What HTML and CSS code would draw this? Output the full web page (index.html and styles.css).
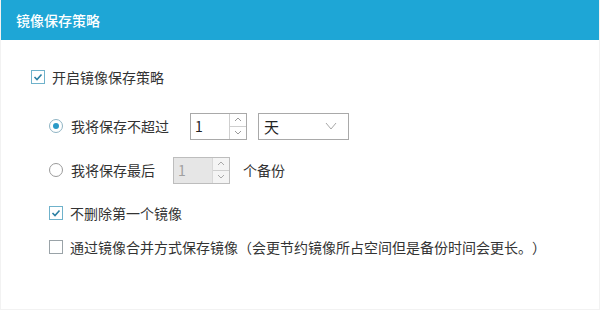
FILE: index.html
```html
<!DOCTYPE html>
<html lang="zh">
<head>
<meta charset="utf-8">
<link rel="stylesheet" href="styles.css">
</head>
<body>
<div class="window">
  <div class="header">镜像保存策略</div>
  <div class="content">
    <div class="row row-main">
      <span class="check checked"><svg viewBox="0 0 14 14" width="14" height="14"><path d="M3.5 7 L6 9.5 L10.5 4.5" fill="none" stroke="#2b7fa3" stroke-width="1.6"/></svg></span>
      <span class="label">开启镜像保存策略</span>
    </div>
    <div class="row row-r1">
      <span class="radio on"><span class="dot"></span></span>
      <span class="label">我将保存不超过</span>
      <div class="spin">
        <span class="val">1</span>
        <span class="arrows">
          <span class="arr"><svg viewBox="0 0 8 5" width="8" height="5"><path d="M1 4 L4 1 L7 4" fill="none" stroke="#9a9a9a" stroke-width="1"/></svg></span>
          <span class="arr"><svg viewBox="0 0 8 5" width="8" height="5"><path d="M1 1 L4 4 L7 1" fill="none" stroke="#9a9a9a" stroke-width="1"/></svg></span>
        </span>
      </div>
      <div class="select">
        <span class="val">天</span>
        <svg viewBox="0 0 12 8" width="12" height="8"><path d="M1 1 L6 7 L11 1" fill="none" stroke="#a8a8a8" stroke-width="1"/></svg>
      </div>
    </div>
    <div class="row row-r2">
      <span class="radio"></span>
      <span class="label">我将保存最后</span>
      <div class="spin disabled">
        <span class="val">1</span>
        <span class="arrows">
          <span class="arr"><svg viewBox="0 0 8 5" width="8" height="5"><path d="M1 4 L4 1 L7 4" fill="none" stroke="#a9a9a9" stroke-width="1"/></svg></span>
          <span class="arr"><svg viewBox="0 0 8 5" width="8" height="5"><path d="M1 1 L4 4 L7 1" fill="none" stroke="#a9a9a9" stroke-width="1"/></svg></span>
        </span>
      </div>
      <span class="label unit">个备份</span>
    </div>
    <div class="row row-c1">
      <span class="check checked"><svg viewBox="0 0 14 14" width="14" height="14"><path d="M3.5 7 L6 9.5 L10.5 4.5" fill="none" stroke="#2b7fa3" stroke-width="1.6"/></svg></span>
      <span class="label">不删除第一个镜像</span>
    </div>
    <div class="row row-c2">
      <span class="check"></span>
      <span class="label">通过镜像合并方式保存镜像（会更节约镜像所占空间但是备份时间会更长。）</span>
    </div>
  </div>
</div>
</body>
</html>
```

FILE: styles.css
```css
html, body {
  margin: 0;
  padding: 0;
  background: #ffffff;
}
body {
  font-family: "Noto Sans CJK SC", "Microsoft YaHei", sans-serif;
  font-size: 14px;
  color: #333333;
  text-spacing-trim: space-all;
}
.window {
  width: 600px;
  height: 310px;
  box-sizing: border-box;
  border-left: 1px solid #f2f2f2;
  border-right: 1px solid #f2f2f2;
  border-bottom: 1px solid #f2f2f2;
  background: #fff;
}
.header {
  height: 40px;
  background: #1ea6d6;
  color: #ffffff;
  font-size: 14px;
  font-weight: 500;
  line-height: 40px;
  padding-left: 15px;
}
.content {
  display: flex;
  flex-direction: column;
}
.row {
  display: flex;
  align-items: center;
  height: 26px;
}
.row-main { margin-top: 24px; padding-left: 30px; }
.row-r1 { margin-top: 23px; padding-left: 48px; }
.row-r2 { margin-top: 18px; padding-left: 48px; }
.row-c1 { margin-top: 17px; padding-left: 48px; }
.row-c2 { margin-top: 8px; padding-left: 48px; }

.check {
  width: 14px;
  height: 14px;
  box-sizing: border-box;
  border: 1px solid #9aa3a8;
  background: #fff;
  margin-right: 7px;
  display: inline-flex;
  position: relative;
}
.check.checked {
  border-color: #6fb2cb;
}
.check svg {
  position: absolute;
  left: -1px;
  top: -1px;
}
.radio {
  width: 14px;
  height: 14px;
  box-sizing: border-box;
  border: 1px solid #9a9a9a;
  border-radius: 50%;
  margin-right: 8px;
  display: inline-flex;
  align-items: center;
  justify-content: center;
}
.radio.on { border-color: #8fb4c4; }
.radio .dot {
  width: 6px;
  height: 6px;
  border-radius: 50%;
  background: #2b9ac7;
}
.label {
  white-space: nowrap;
  line-height: 20px;
}
.row-r1 .label { margin-right: 21px; }
.row-r2 .label { margin-right: 18px; }
.label.unit { margin-left: 13px; margin-right: 0; }

.spin {
  width: 57px;
  height: 27px;
  box-sizing: border-box;
  border: 1px solid #a9a9a9;
  display: flex;
  background: #fff;
}
.spin .val {
  flex: 1;
  padding-left: 4px;
  line-height: 25px;
  font-size: 14px;
  color: #222;
}
.spin .arrows {
  width: 16px;
  border-left: 1px solid #cfcfcf;
  display: flex;
  flex-direction: column;
}
.spin .arr {
  flex: 1;
  display: flex;
  align-items: center;
  justify-content: center;
}
.spin .arr + .arr {
  border-top: 1px solid #cfcfcf;
}
.spin.disabled {
  background: #e6e6e6;
  border-color: #bdbdbd;
}
.spin.disabled .val { color: #a0a0a0; }
.spin.disabled .arrows { background: #f4f4f4; border-left-color: #d8d8d8; }

.select {
  width: 91px;
  height: 27px;
  box-sizing: border-box;
  border: 1px solid #a9a9a9;
  margin-left: 11px;
  display: flex;
  align-items: center;
  justify-content: space-between;
  padding: 0 11px 0 5px;
}
.select .val {
  font-size: 15px;
  color: #222;
}
```
